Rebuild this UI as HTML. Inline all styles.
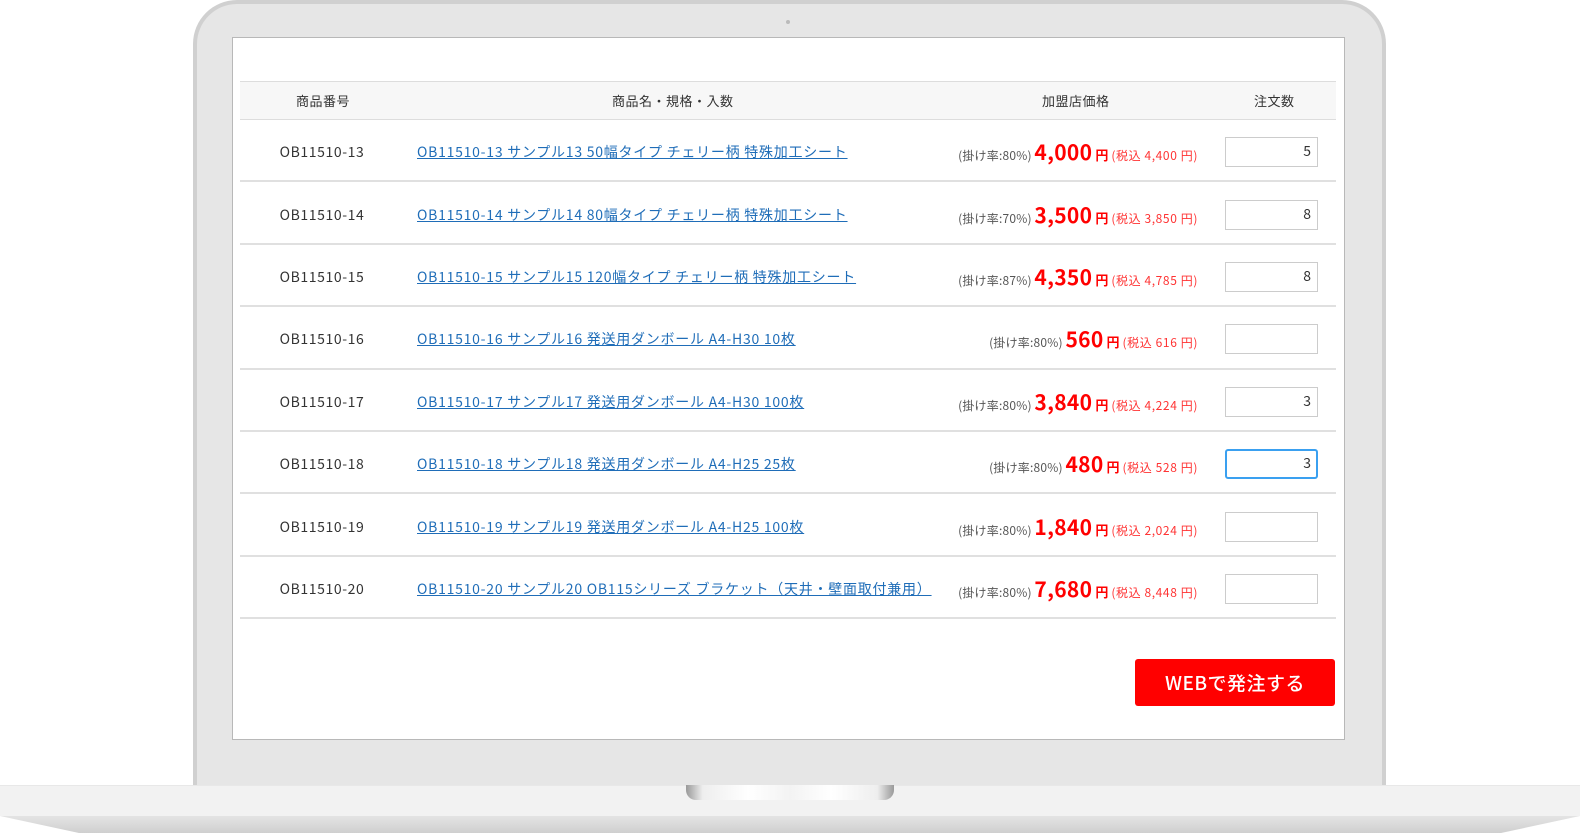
<!DOCTYPE html><html><head><meta charset="utf-8"><style>
*{box-sizing:border-box;margin:0;padding:0}
body{width:1580px;height:833px;background:#fff;position:relative;overflow:hidden;font-family:"Noto Sans CJK JP","Liberation Sans",sans-serif}
.frame{position:absolute;left:193px;top:0;width:1193px;height:800px;background:#e6e6e6;border:4px solid #d0d0d0;border-bottom:none;border-radius:44px 44px 0 0}
.cam{position:absolute;left:786px;top:20px;width:4px;height:4px;border-radius:2px;background:#bbb}
.screen{position:absolute;left:232px;top:37px;width:1113px;height:703px;background:#fff;border:1px solid #b8b8b8}
.base{position:absolute;left:0;top:785px;width:1580px;height:31px;background:#f2f2f2;border-top:1px solid #e8e8e8}
.base2{position:absolute;left:0;top:816px;width:1580px;height:17px;background:linear-gradient(#e4e4e4,#cfcfcf);clip-path:polygon(0 0,100% 0,95% 100%,5% 100%)}
.notch{position:absolute;left:686px;top:785px;width:208px;height:15px;border-radius:0 0 10px 10px;background:linear-gradient(90deg,#999,#eee 8%,#fff 30%,#f3f3f3 50%,#fff 70%,#eee 92%,#999)}
.hdr{position:absolute;left:240px;top:81px;width:1096px;height:39px;background:#f7f7f7;border-top:1px solid #ddd;border-bottom:1px solid #ddd;font-size:13px;color:#333;letter-spacing:.5px}
.hdr span{position:absolute;top:9px}
.row{position:absolute;left:240px;width:1096px;height:62.4px;border-bottom:2px solid #e0e0e0;color:#333}
.row>div{top:calc(50% + 2px)!important}
.num{position:absolute;left:30px;width:104px;text-align:center;top:50%;transform:translateY(-50%);font-size:14px;letter-spacing:.6px}
.nm{position:absolute;left:177px;top:50%;transform:translateY(-50%);font-size:14px;color:#1f6db8;text-decoration:underline;letter-spacing:.75px;white-space:nowrap}
.pr{position:absolute;right:138px;top:50%;transform:translateY(-50%);white-space:nowrap;color:#f00;font-size:12px}
.pr .r{color:#555;font-size:12px;letter-spacing:.2px}
.pr b{font-size:21px;letter-spacing:.3px}
.pr .y{font-weight:bold;font-size:13px;margin:0 3px}
.pr .t{color:#f33;letter-spacing:.6px}
.in{position:absolute;left:985px;top:50%;transform:translateY(-50%);width:93px;height:30px;border:1px solid #ccc;font-size:14px;text-align:right;padding:3px 6px 0 0;color:#333}
.in.f{border:2px solid #3aa0f0;border-radius:3px;padding:2px 5px 0 0}
.btn{position:absolute;left:1135px;top:659px;width:200px;height:47px;background:#f00;border-radius:3px;color:#fff;font-size:19px;font-weight:500;text-align:center;line-height:47px;letter-spacing:.5px}
</style></head><body>
<div class="frame"></div><div class="cam"></div>
<div class="screen"></div>
<div class="base"></div><div class="base2"></div><div class="notch"></div>
<div class="hdr"><span style="left:56px">商品番号</span><span style="left:372px">商品名・規格・入数</span><span style="left:802px">加盟店価格</span><span style="left:1014px">注文数</span></div>

<div class="row" style="top:120px"><div class="num">OB11510-13</div><div class="nm">OB11510-13 サンプル13 50幅タイプ チェリー柄 特殊加工シート</div><div class="pr"><span class="r">(掛け率:80%)</span> <b>4,000</b><span class="y">円</span><span class="t">(税込 4,400 円)</span></div><div class="in">5</div></div>
<div class="row" style="top:182.4px"><div class="num">OB11510-14</div><div class="nm">OB11510-14 サンプル14 80幅タイプ チェリー柄 特殊加工シート</div><div class="pr"><span class="r">(掛け率:70%)</span> <b>3,500</b><span class="y">円</span><span class="t">(税込 3,850 円)</span></div><div class="in">8</div></div>
<div class="row" style="top:244.8px"><div class="num">OB11510-15</div><div class="nm">OB11510-15 サンプル15 120幅タイプ チェリー柄 特殊加工シート</div><div class="pr"><span class="r">(掛け率:87%)</span> <b>4,350</b><span class="y">円</span><span class="t">(税込 4,785 円)</span></div><div class="in">8</div></div>
<div class="row" style="top:307.2px"><div class="num">OB11510-16</div><div class="nm">OB11510-16 サンプル16 発送用ダンボール A4-H30 10枚</div><div class="pr"><span class="r">(掛け率:80%)</span> <b>560</b><span class="y">円</span><span class="t">(税込 616 円)</span></div><div class="in"></div></div>
<div class="row" style="top:369.6px"><div class="num">OB11510-17</div><div class="nm">OB11510-17 サンプル17 発送用ダンボール A4-H30 100枚</div><div class="pr"><span class="r">(掛け率:80%)</span> <b>3,840</b><span class="y">円</span><span class="t">(税込 4,224 円)</span></div><div class="in">3</div></div>
<div class="row" style="top:432px"><div class="num">OB11510-18</div><div class="nm">OB11510-18 サンプル18 発送用ダンボール A4-H25 25枚</div><div class="pr"><span class="r">(掛け率:80%)</span> <b>480</b><span class="y">円</span><span class="t">(税込 528 円)</span></div><div class="in f">3</div></div>
<div class="row" style="top:494.4px"><div class="num">OB11510-19</div><div class="nm">OB11510-19 サンプル19 発送用ダンボール A4-H25 100枚</div><div class="pr"><span class="r">(掛け率:80%)</span> <b>1,840</b><span class="y">円</span><span class="t">(税込 2,024 円)</span></div><div class="in"></div></div>
<div class="row" style="top:556.8px"><div class="num">OB11510-20</div><div class="nm">OB11510-20 サンプル20 OB115シリーズ ブラケット（天井・壁面取付兼用）</div><div class="pr"><span class="r">(掛け率:80%)</span> <b>7,680</b><span class="y">円</span><span class="t">(税込 8,448 円)</span></div><div class="in"></div></div>
<div class="btn">WEBで発注する</div>
</body></html>
